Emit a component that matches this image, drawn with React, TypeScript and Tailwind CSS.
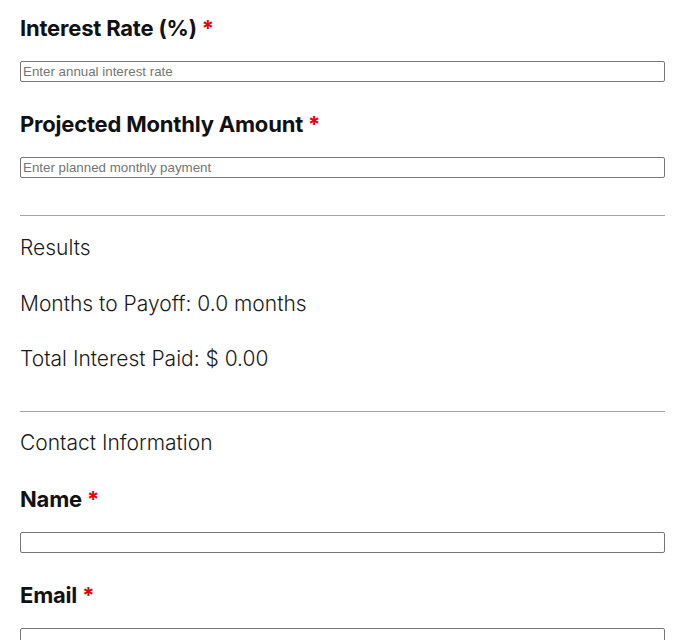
import React from "react";

type FieldProps = { label: string; placeholder?: string };

function Field({ label, placeholder }: FieldProps) {
  return (
    <div className="mb-7">
      <label className="block text-[22px] leading-[28px] font-bold text-[#111] tracking-[-0.2px]">
        {label}
        <span className="ml-[5px] text-[#e5000b]">*</span>
      </label>
      <input
        type="text"
        placeholder={placeholder}
        className="mt-[19px] block h-[21px] w-full rounded-[2px] border border-[#767676] bg-white px-[2px] text-[13.33px] font-['Liberation_Sans',Arial,sans-serif] text-black placeholder:text-[#757575] outline-none"
      />
    </div>
  );
}

export default function App() {
  return (
    <div className="min-h-screen bg-white pl-5 pr-[27px] pt-[14px] font-['Inter',sans-serif]">
      <Field label="Interest Rate (%)" placeholder="Enter annual interest rate" />
      <Field label="Projected Monthly Amount" placeholder="Enter planned monthly payment" />

      <hr className="mt-[37px] border-0 border-t border-[#a3a3a3]" />
      <div className="mt-[18px] text-[21px] leading-[28px] font-light text-[#1a1a1a]">
        <p>Results</p>
        <p className="mt-[28px]">Months to Payoff: 0.0 months</p>
        <p className="mt-[27px]">Total Interest Paid: $ 0.00</p>
      </div>

      <hr className="mt-[38px] border-0 border-t border-[#a3a3a3]" />
      <p className="mt-[17px] text-[21px] leading-[28px] font-light text-[#1a1a1a]">
        Contact Information
      </p>
      <div className="mt-7">
        <Field label="Name" />
        <Field label="Email" />
      </div>
    </div>
  );
}
